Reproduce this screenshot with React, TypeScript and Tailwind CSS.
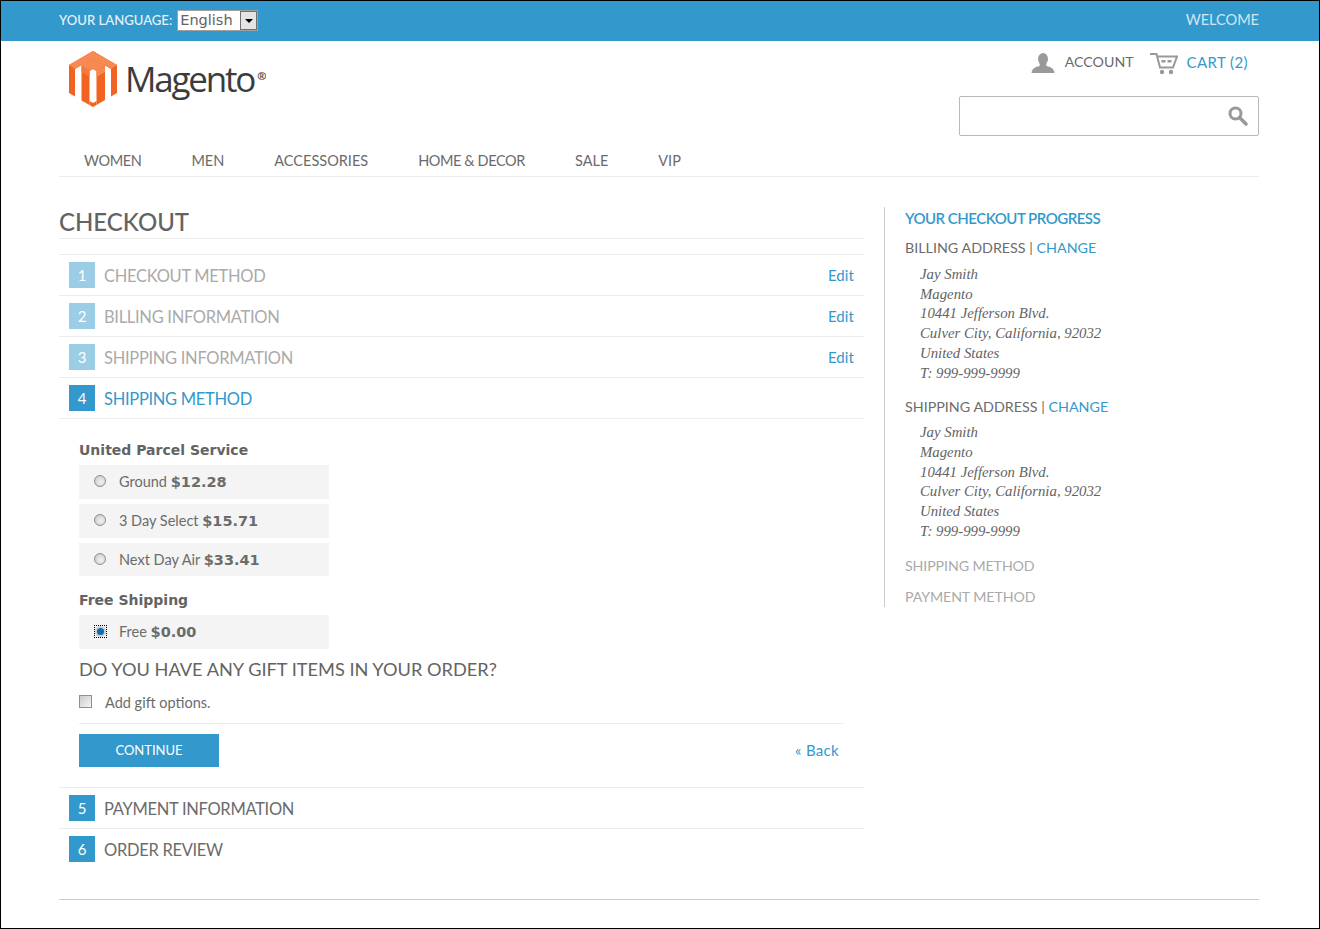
import React from 'react';

const raleway = "font-['Lato','Open_Sans',sans-serif]";

function Logo() {
  return (
    <svg width="48" height="56" viewBox="0 0 48 56">
      <polygon points="24,0 48,14 48,42 42,45.5 42,18 24,7.5 6,18 6,45.5 0,42 0,14" fill="#f26322" />
      <polygon points="24,0 48,14 42,18 24,7.5 6,18 0,14" fill="#f68a52" />
      <polygon points="24,7.5 36,14.5 36,49 27.5,54 27.5,20 24,18 20.5,20 20.5,54 12.5,49.5 12.5,14.5" fill="#f26322" />
      <polygon points="24,7.5 36,14.5 27.5,20 24,18 20.5,20 12.5,14.5" fill="#f68a52" />
      <polygon points="12.5,14.5 20.5,20 20.5,26 12.5,21" fill="#f47a3c" />
      <polygon points="27.5,20 36,14.5 36,21 27.5,26" fill="#f68a52" />
      <polygon points="20.5,54 24,56 27.5,54 27.5,50 24,52 20.5,50" fill="#f26322" />
    </svg>
  );
}

function UserIcon() {
  return (
    <svg width="24" height="20" viewBox="0 0 24 20" fill="#999999">
      <ellipse cx="12" cy="6" rx="5" ry="6" />
      <path d="M9 10 L15 10 L15.5 13 C19 14 23 15 23.5 20 L0.5 20 C1 15 5 14 8.500 13 Z" />
    </svg>
  );
}

function CartIcon() {
  return (
    <svg width="28" height="22" viewBox="0 0 28 22" fill="none">
      <path d="M0 1 H6.500 L10 14.500 H23 L27 3.500 H8" stroke="#999999" strokeWidth="2" />
      <rect x="11.500" y="7" width="4" height="2.500" fill="#999999" />
      <rect x="17.500" y="7" width="4" height="2.500" fill="#999999" />
      <circle cx="12" cy="19" r="2.200" fill="#999999" />
      <circle cx="21" cy="19" r="2.200" fill="#999999" />
    </svg>
  );
}

function SearchIcon() {
  return (
    <svg width="20" height="20" viewBox="0 0 20 20" fill="none">
      <circle cx="7.500" cy="7.500" r="5.500" stroke="#999999" strokeWidth="3" />
      <path d="M11.500 11.500 L18 18" stroke="#999999" strokeWidth="3.500" strokeLinecap="round" />
    </svg>
  );
}

function StepRow({ n, label, done, active, edit }: { n: number; label: string; done?: boolean; active?: boolean; edit?: boolean }) {
  return (
    <div className="flex h-[41px] items-center border-t border-[#ededed] pl-[10px] pr-[10px]">
      <span className={`flex h-[26px] w-[26px] items-center justify-center pt-[1px] text-[15px] text-white ${raleway} ${done ? 'bg-[#9bcde6]' : 'bg-[#3399cc]'}`}>{n}</span>
      <span className={`ml-[9px] pt-[2px] text-[16.500px] tracking-[-0.3px] ${raleway} ${done ? 'text-[#aaaaaa]' : active ? 'text-[#3399cc]' : 'text-[#6b6b6b]'}`}>{label}</span>
      {edit && <span className={`ml-auto text-[15px] tracking-[0.1px] text-[#3399cc] ${raleway}`}>Edit</span>}
    </div>
  );
}

function Radio({ checked }: { checked?: boolean }) {
  if (checked) {
    return (
      <span className="flex h-[13px] w-[13px] items-center justify-center border border-dotted border-black">
        <span className="flex h-[11px] w-[11px] items-center justify-center rounded-full bg-[#cfcfcf]">
          <span className="h-[7px] w-[7px] rounded-full bg-[#0f6ea8]" />
        </span>
      </span>
    );
  }
  return <span className="h-[12px] w-[12px] rounded-full border border-[#8f8f8f] bg-[radial-gradient(circle_at_60%_60%,#f2f2f2,#c4c4c4)]" />;
}

function RateRow({ label, price, checked, short }: { label: string; price: string; checked?: boolean; short?: boolean }) {
  return (
    <div className={`flex w-[250px] items-start bg-[#f4f4f4] pl-[15px] pt-[8px] ${short ? 'h-[33px]' : 'h-[34px]'}`}>
      <span className="mt-[2px] flex w-[25px] shrink-0 items-start"><Radio checked={checked} /></span>
      <span className={`text-[14.500px] leading-[18px] text-[#6b6b6b] ${raleway}`}>{label} <span className="font-['DejaVu_Sans',sans-serif] text-[14.500px] font-bold">{price}</span></span>
    </div>
  );
}

function Address() {
  return (
    <div className="ml-[15px] mt-[6px] font-['Liberation_Serif',serif] text-[14.800px] italic leading-[19.700px] text-[#636363]">
      <div>Jay Smith</div>
      <div>Magento</div>
      <div>10441 Jefferson Blvd.</div>
      <div>Culver City, California, 92032</div>
      <div>United States</div>
      <div>T: 999-999-9999</div>
    </div>
  );
}

export default function App() {
  return (
    <div className={`h-[929px] w-[1320px] overflow-hidden border border-black bg-white ${raleway}`}>
      <div className="flex h-[40px] items-start justify-between bg-[#3399cc] pl-[58px] pr-[60px]">
        <div className="flex items-center pt-[9px]">
          <span className="text-[13.100px] font-medium text-[#e6f3fa]">YOUR LANGUAGE:</span>
          <div className="relative ml-[5px] h-[21px] w-[81px] border border-[#a0a0a0] bg-white">
            <select className="block h-[19px] w-full appearance-none bg-transparent pl-[2px] font-['DejaVu_Sans',sans-serif] text-[14.500px] leading-[19px] text-[#636363] outline-none">
              <option>English</option>
            </select>
            <span className="absolute right-0 top-0 flex h-[19px] w-[17px] items-center justify-center border border-[#707070] bg-[#e4e4e4]">
              <span className="h-0 w-0 border-x-[4px] border-t-[4px] border-x-transparent border-t-black" />
            </span>
          </div>
        </div>
        <span className="pt-[8px] text-[14.500px] text-[#cfe6f2]">WELCOME</span>
      </div>

      <div className="pl-[58px] pr-[60px]">
        <div className="flex h-[95px] items-start justify-between">
          <div className="flex items-start pl-[10px] pt-[10px]">
            <Logo />
            <div className="ml-[8px] mt-[4px] flex items-start font-['Open_Sans',sans-serif] text-[35px] leading-[48px] tracking-[-2.200px] text-[#3c3c3c]">
              Magento<span className="ml-[3px] mt-[-3px] text-[11px] font-bold tracking-normal">®</span>
            </div>
          </div>
          <div className="flex flex-col items-end">
            <div className="flex items-start pr-[11px] pt-[12px]">
              <UserIcon />
              <span className="ml-[10px] text-[14.200px] leading-[18px] text-[#6b6b6b]">ACCOUNT</span>
              <span className="ml-[16px]"><CartIcon /></span>
              <span className="ml-[9px] text-[15px] leading-[18px] tracking-[0.4px] text-[#3399cc]">CART (2)</span>
            </div>
            <div className="mt-[21px] flex h-[40px] w-[300px] items-center justify-end rounded-[2px] border border-[#b8b8b8] pr-[10px]">
              <SearchIcon />
            </div>
          </div>
        </div>

        <nav className="flex h-[41px] items-center gap-[50px] border-b border-[#ededed] pl-[25px] pt-[10px] text-[14.500px] text-[#6b6b6b]">
          <span className="tracking-[-0.4px]">WOMEN</span>
          <span>MEN</span>
          <span>ACCESSORIES</span>
          <span className="tracking-[-0.4px]">HOME &amp; DECOR</span>
          <span>SALE</span>
          <span>VIP</span>
        </nav>

        <div className="mt-[30px] flex items-start">
          <main className="w-[805px]">
            <h1 className="h-[32px] border-b border-[#ededed] text-[24px] font-medium leading-[30px] text-[#636363]">CHECKOUT</h1>
            <div className="mt-[15px]">
              <StepRow n={1} label="CHECKOUT METHOD" done edit />
              <StepRow n={2} label="BILLING INFORMATION" done edit />
              <StepRow n={3} label="SHIPPING INFORMATION" done edit />
              <StepRow n={4} label="SHIPPING METHOD" active />
              <div className="h-[369px] border-t border-[#ededed] px-[20px]">
                <h3 className="mt-[21px] font-['DejaVu_Sans',sans-serif] text-[14px] font-bold leading-[20px] text-[#636363]">United Parcel Service</h3>
                <div className="mt-[5px] flex flex-col gap-[5px]">
                  <RateRow label="Ground" price="$12.28" />
                  <RateRow label="3 Day Select" price="$15.71" />
                  <RateRow label="Next Day Air" price="$33.41" short />
                </div>
                <h3 className="mt-[14px] font-['DejaVu_Sans',sans-serif] text-[14px] font-bold leading-[20px] text-[#636363]">Free Shipping</h3>
                <div className="mt-[5px]">
                  <RateRow label="Free" price="$0.00" checked />
                </div>
                <h2 className="mt-[8px] text-[18.200px] leading-[24px] text-[#636363]">DO YOU HAVE ANY GIFT ITEMS IN YOUR ORDER?</h2>
                <div className="mt-[13px] flex h-[20px] items-start">
                  <span className="mt-[1px] h-[13px] w-[13px] border border-[#8f8f8f] bg-linear-to-br from-[#cccccc] to-[#f4f4f4]" />
                  <span className="ml-[13px] text-[14.500px] leading-[18px] text-[#6b6b6b]">Add gift options.</span>
                </div>
                <div className="mt-[9px] flex items-center justify-between border-t border-[#ededed] pr-[5px] pt-[10px]">
                  <div className="flex h-[33px] w-[140px] items-center justify-center bg-[#3399cc] text-[13px] text-white">CONTINUE</div>
                  <span className="text-[15px] tracking-[0.3px] text-[#3399cc]">« Back</span>
                </div>
              </div>
              <StepRow n={5} label="PAYMENT INFORMATION" />
              <StepRow n={6} label="ORDER REVIEW" />
            </div>
          </main>

          <aside className="ml-[20px] h-[400px] w-[375px] border-l border-[#cccccc] pl-[20px]">
            <h2 className="text-[15px] font-semibold leading-[22px] tracking-[-0.5px] text-[#3399cc]">YOUR CHECKOUT PROGRESS</h2>
            <div className="mt-[8px] text-[14.300px] leading-[22px] text-[#6b6b6b]">BILLING ADDRESS | <span className="text-[#3399cc]">CHANGE</span></div>
            <Address />
            <div className="mt-[13px] text-[14.300px] leading-[22px] text-[#6b6b6b]">SHIPPING ADDRESS | <span className="text-[#3399cc]">CHANGE</span></div>
            <div className="-mt-[1px]"><Address /></div>
            <div className="mt-[14px] text-[14.200px] leading-[22px] tracking-[-0.1px] text-[#aaaaaa]">SHIPPING METHOD</div>
            <div className="mt-[9px] text-[14.200px] leading-[22px] tracking-[-0.1px] text-[#aaaaaa]">PAYMENT METHOD</div>
          </aside>
        </div>

        <div className="mt-[30px] border-t border-[#cccccc]" />
      </div>
    </div>
  );
}
